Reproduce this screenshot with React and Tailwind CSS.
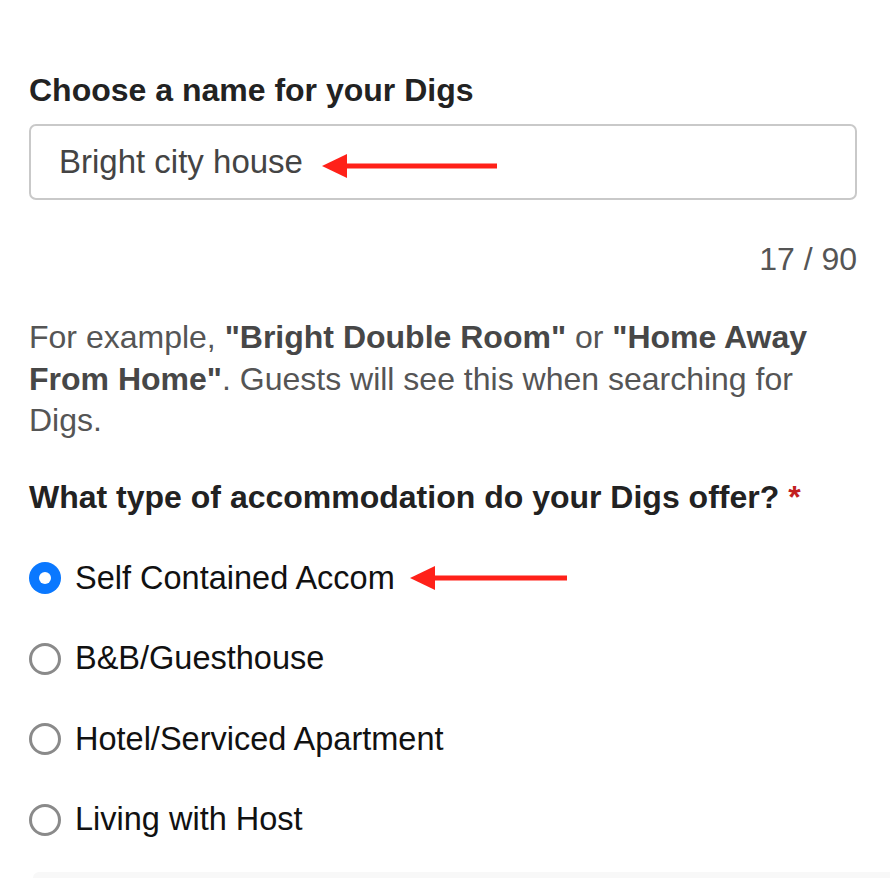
import React from 'react';

// red annotation arrow pointing left; len = total length in px
const Arrow = ({ className, len }) => (
  <svg className={className} width={len} height="26" viewBox={`0 0 ${len} 26`}>
    <polygon points="0,13 25,1 25,25" fill="#ff2119" />
    <rect x="23" y="10.5" width={len - 24} height="5" fill="#ff2119" />
  </svg>
);

const Radio = ({ checked }) =>
  checked ? (
    <span className="flex h-[32px] w-[32px] shrink-0 items-center justify-center rounded-full bg-[#0a78ff]">
      <span className="h-[12px] w-[12px] rounded-full bg-white" />
    </span>
  ) : (
    <span className="h-[32px] w-[32px] shrink-0 rounded-full border-[3px] border-[#8a8a8a]" />
  );

const options = [
  { label: 'Self Contained Accom', checked: true },
  { label: 'B&B/Guesthouse' },
  { label: 'Hotel/Serviced Apartment' },
  { label: 'Living with Host' },
];

const App = () => (
  <div className="min-h-screen w-full overflow-hidden bg-white font-['Liberation_Sans',Arial,sans-serif]">
    <div className="pl-[29px] pr-[33px] pt-[70px]">
      <h2 className="text-[32px] font-bold leading-[40px] text-[#222]">Choose a name for your Digs</h2>

      <div className="relative mt-[14px] flex h-[76px] items-center rounded-[7px] border-2 border-[#c9c9c9] pl-[28px]">
        <span className="text-[33px] text-[#444]">Bright city house</span>
        <Arrow len={176} className="absolute left-[291px] top-[27px]" />
      </div>

      <div className="mt-[39px] text-right text-[32px] leading-[40px] text-[#555]">17 / 90</div>

      <p className="mt-[38px] text-[32px] leading-[41.5px] text-[#555]">
        For example, <b className="text-[#474747]">"Bright Double Room"</b> or{' '}
        <b className="text-[#474747]">"Home Away From Home"</b>. Guests will see this when searching for Digs.
      </p>

      <h2 className="mt-[35.5px] text-[32px] font-bold leading-[40px] text-[#222]">
        What type of accommodation do your Digs offer? <span className="text-[#c2201f]">*</span>
      </h2>

      <div className="mt-[21px] flex flex-col">
        {options.map((o) => (
          <div key={o.label} className="relative flex h-[80.5px] items-center gap-[14px]">
            <Radio checked={o.checked} />
            <span className="text-[32.5px] text-[#111]">{o.label}</span>
            {o.checked && <Arrow len={158} className="absolute left-[381px] top-[27px]" />}
          </div>
        ))}
      </div>
    </div>
    <div className="ml-[33px] mt-[12px] h-[20px] rounded-tl-[6px] bg-[#f8f8f8]" />
  </div>
);

export default App;
